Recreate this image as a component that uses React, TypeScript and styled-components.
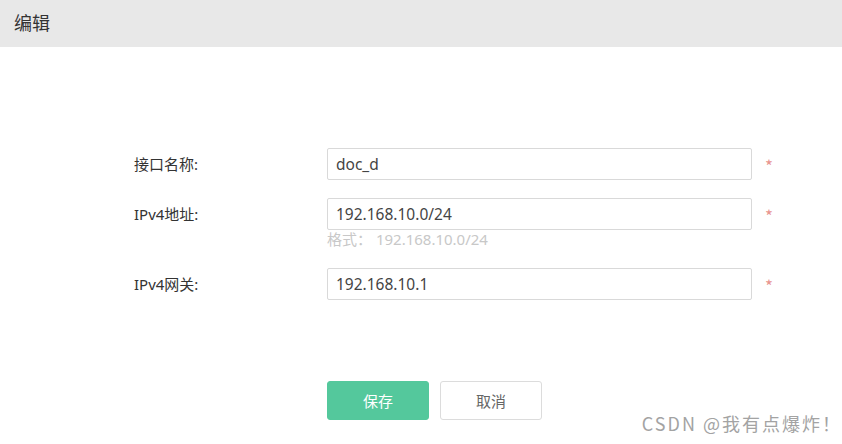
import React from 'react';
import {createGlobalStyle, styled} from 'styled-components';

const GlobalStyle = createGlobalStyle`
  html, body {
    margin: 0;
    padding: 0;
    background: #ffffff;
  }
  body {
    font-family: "Noto Sans CJK SC", "Noto Sans", sans-serif;
    color: #333333;
  }
`;

type Field = {
  label: string;
  value: string;
  hint?: string;
};

const fields: Field[] = [
  {label: '接口名称:', value: 'doc_d'},
  {label: 'IPv4地址:', value: '192.168.10.0/24', hint: '格式： 192.168.10.0/24'},
  {label: 'IPv4网关:', value: '192.168.10.1'},
];

export default function App() {
  return (
    <Page>
      <GlobalStyle />
      <Header>
        <Title>编辑</Title>
      </Header>
      <Form>
        {fields.map((f) => (
          <Row key={f.label} $hasHint={!!f.hint}>
            <Label>{f.label}</Label>
            <FieldCol>
              <Input value={f.value} readOnly />
              {f.hint && <Hint>{f.hint}</Hint>}
            </FieldCol>
            <Star>*</Star>
          </Row>
        ))}
      </Form>
      <Actions>
        <Button $primary>保存</Button>
        <Button>取消</Button>
      </Actions>
      <Watermark>CSDN @我有点爆炸！</Watermark>
    </Page>
  );
}

const Page = styled.div`
  position: relative;
  width: 842px;
  height: 444px;
  overflow: hidden;
  background: #fff;
`;

const Header = styled.div`
  height: 47px;
  background: #e8e8e8;
  display: flex;
  align-items: center;
  padding-left: 14px;
`;

const Title = styled.h2`
  margin: 0;
  font-size: 18px;
  font-weight: 400;
  color: #333;
  position: relative;
  top: -2px;
`;

const Form = styled.div`
  display: flex;
  flex-direction: column;
  padding-top: 101px;
  padding-left: 134px;
`;

const Row = styled.div<{$hasHint?: boolean}>`
  display: grid;
  grid-template-columns: 193px 425px auto;
  align-items: start;
  margin-bottom: ${(p) => (p.$hasHint ? '20px' : '18px')};
`;

const Label = styled.div`
  font-family: "Noto Sans", "Noto Sans CJK SC", sans-serif;
  font-size: 15px;
  line-height: 32px;
  color: #333;
`;

const FieldCol = styled.div`
  display: flex;
  flex-direction: column;
`;

const Input = styled.input`
  box-sizing: border-box;
  width: 425px;
  height: 32px;
  border: 1px solid #d9d9d9;
  border-radius: 2px;
  padding: 0 8px;
  font-family: "Noto Sans", "Noto Sans CJK SC", sans-serif;
  font-size: 15.5px;
  color: #444;
  background: #fff;
  outline: none;
`;

const Hint = styled.div`
  font-family: "Noto Sans", "Noto Sans CJK SC", sans-serif;
  font-size: 15px;
  line-height: 18px;
  color: #c8c8c8;
`;

const Star = styled.span`
  box-sizing: border-box;
  margin-left: 13px;
  padding-top: 4px;
  line-height: 28px;
  height: 32px;
  font-size: 17px;
  color: #e8958f;
`;

const Actions = styled.div`
  display: flex;
  gap: 11px;
  padding-left: 327px;
  margin-top: 63px;
`;

const Button = styled.button<{$primary?: boolean}>`
  box-sizing: border-box;
  width: 102px;
  height: 39px;
  border-radius: 3px;
  font-family: "Noto Sans CJK SC", sans-serif;
  font-size: 15px;
  border: 1px solid ${(p) => (p.$primary ? '#54c89c' : '#dcdcdc')};
  background: ${(p) => (p.$primary ? '#54c89c' : '#fff')};
  color: ${(p) => (p.$primary ? '#fff' : '#666')};
  cursor: pointer;
`;

const Watermark = styled.div`
  position: absolute;
  right: 0;
  bottom: 8px;
  font-size: 18px;
  color: #a3a3a3;
  letter-spacing: 2px;
`;
